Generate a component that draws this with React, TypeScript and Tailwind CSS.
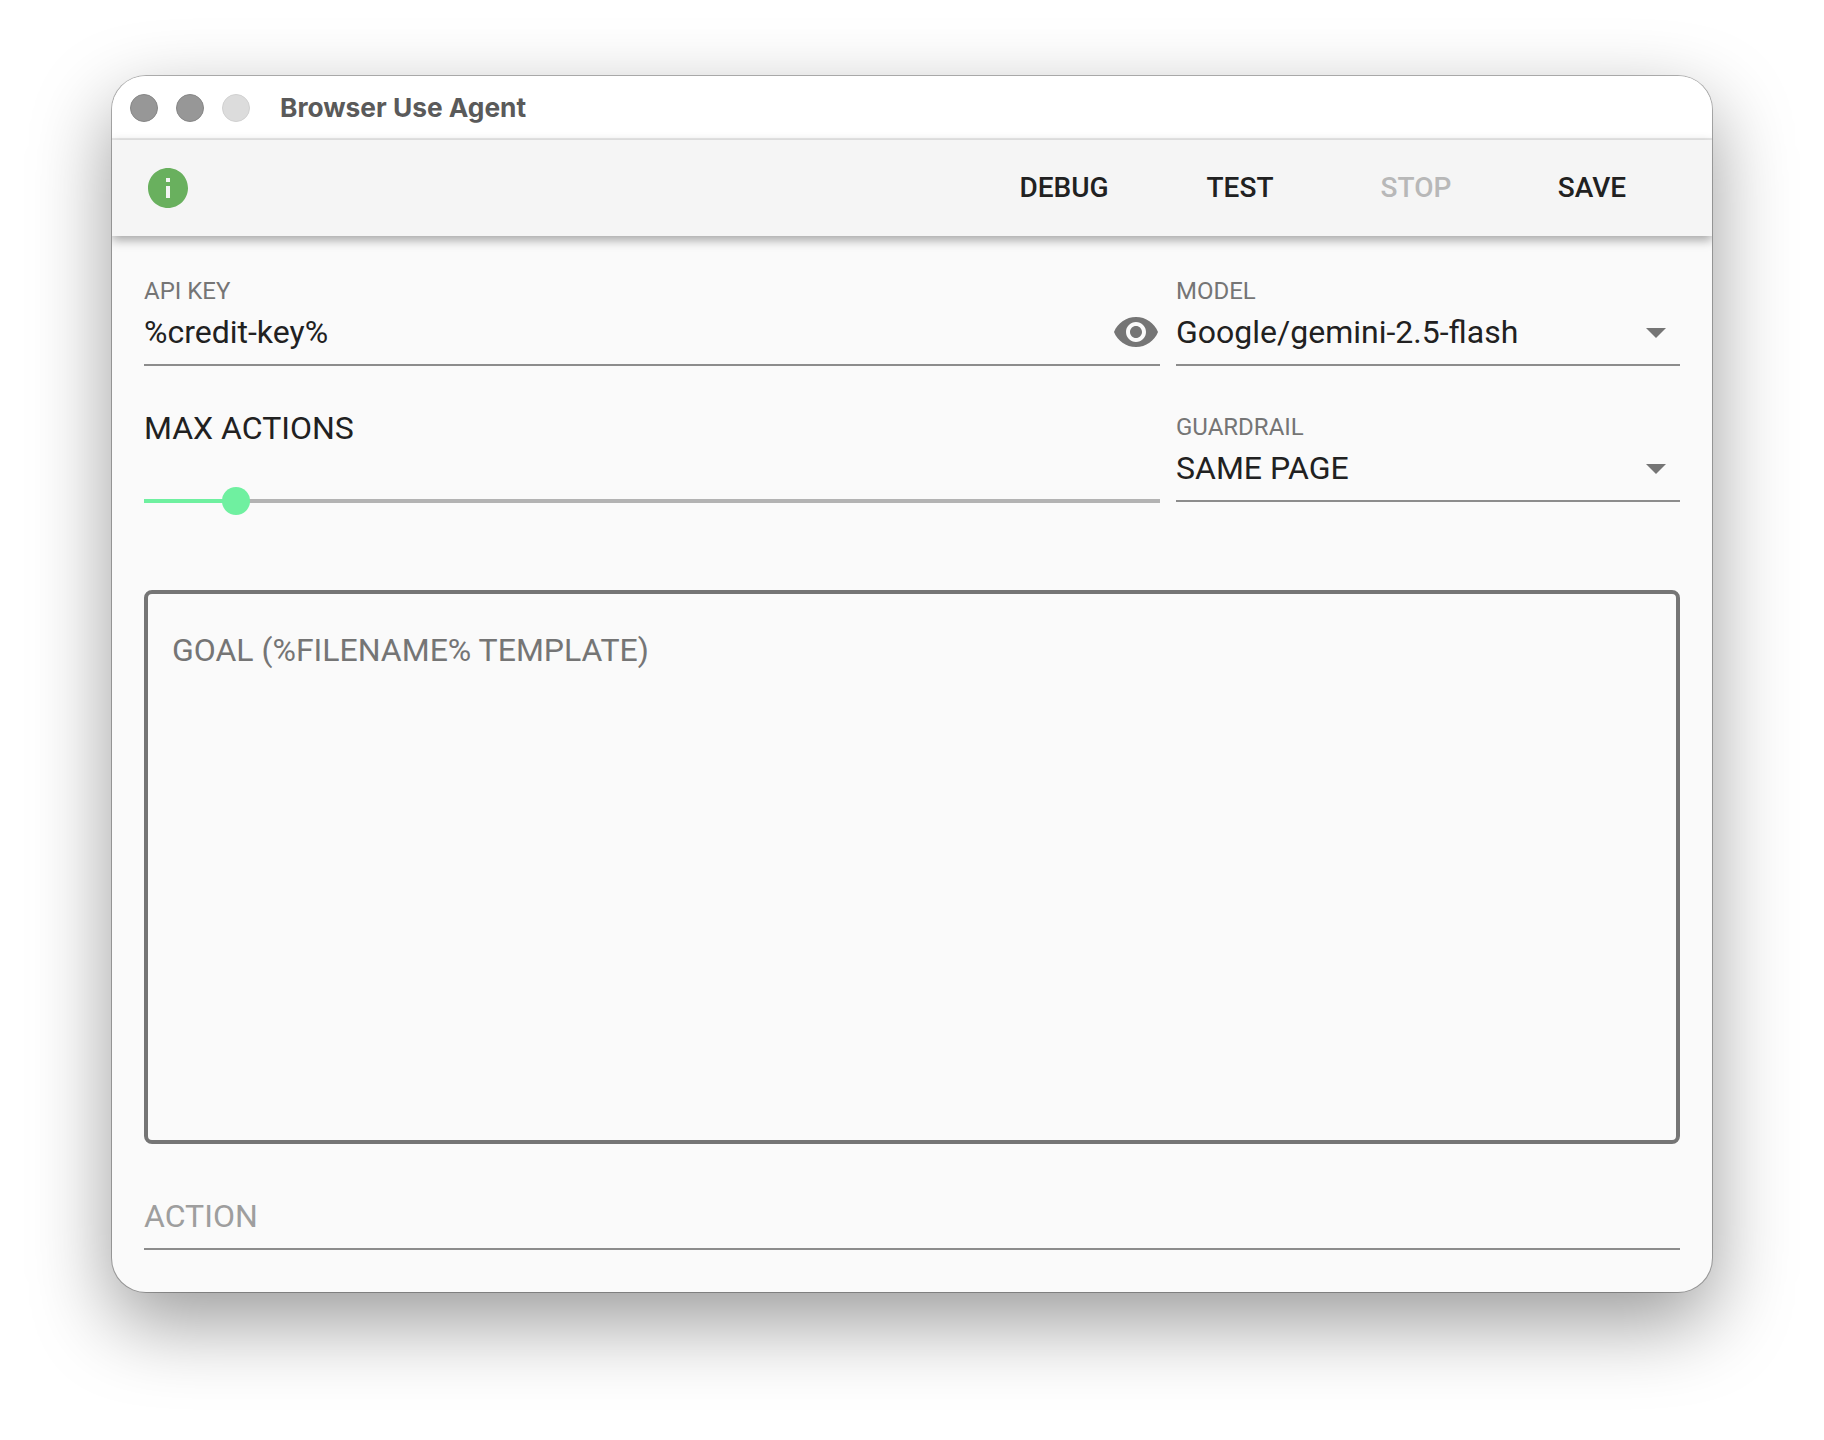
const ROBOTO = "font-['Roboto',sans-serif]";

const ArrowDrop = () => (
  <svg viewBox="0 0 24 24" className="h-12 w-12 shrink-0 fill-[#757575]">
    <path d="M7 10l5 5 5-5z" />
  </svg>
);

const Field = ({ label, value }: { label: string; value: string }) => (
  <div className="flex h-[92px] flex-col border-b-2 border-[#8c8c8c]">
    <div className="h-[34px] text-[24px] leading-[34px] text-[#757575]">{label}</div>
    <div className="flex h-12 items-center justify-between text-[32px] leading-[48px] text-[#212121]">
      <span>{value}</span>
      <ArrowDrop />
    </div>
  </div>
);

export default function App() {
  return (
    <div className="min-h-[1440px] bg-white pl-[112px] pt-[76px]">
      <div className={`flex h-[1216px] w-[1600px] flex-col overflow-hidden rounded-[34px] bg-[#fafafa] shadow-[0_0_0_1px_rgba(0,0,0,0.28),0_30px_80px_rgba(0,0,0,0.4)] ${ROBOTO}`}>
        {/* Title bar */}
        <div className="flex h-16 shrink-0 items-center border-b-2 border-[#ebebeb] bg-white pl-[18px]">
          <div className="mt-[2px] flex gap-[18px]">
            <div className="h-7 w-7 rounded-full border border-[#868686] bg-[#979797]" />
            <div className="h-7 w-7 rounded-full border border-[#868686] bg-[#979797]" />
            <div className="h-7 w-7 rounded-full border border-[#d0d0d0] bg-[#dcdcdc]" />
          </div>
          <span className="ml-[30px] mt-[2px] font-['Inter',sans-serif] text-[26.3px] font-bold text-[#5a5a5a]">
            Browser Use Agent
          </span>
        </div>

        {/* Toolbar */}
        <div className="relative z-10 flex h-24 shrink-0 items-center justify-between bg-[#f5f5f5] px-8 shadow-[0_4px_10px_rgba(0,0,0,0.35)]">
          <svg viewBox="0 0 24 24" className="h-12 w-12 fill-[#69b05e]">
            <path d="M12 2C6.48 2 2 6.48 2 12s4.48 10 10 10 10-4.48 10-10S17.52 2 12 2zm1 15h-2v-6h2v6zm0-8h-2V7h2v2z" />
          </svg>
          <div className="flex text-[28px] font-medium text-[#212121]">
            <button className="w-44">DEBUG</button>
            <button className="w-44">TEST</button>
            <button className="w-44 text-[#b8b8b8]">STOP</button>
            <button className="w-44">SAVE</button>
          </div>
        </div>

        {/* Form */}
        <div className="flex flex-1 flex-col px-8 pt-[38px]">
          <div className="grid grid-cols-[1016px_504px] gap-x-4 gap-y-11">
            <div className="flex h-[92px] flex-col border-b-2 border-[#8c8c8c]">
              <div className="h-[34px] text-[24px] leading-[34px] text-[#757575]">API KEY</div>
              <div className="flex h-12 items-center justify-between text-[32px] leading-[48px] text-[#212121]">
                <span>%credit-key%</span>
                <svg viewBox="0 0 24 24" className="h-12 w-12 shrink-0 fill-[#757575]">
                  <path d="M12 4.5C7 4.5 2.73 7.61 1 12c1.73 4.39 6 7.5 11 7.5s9.27-3.11 11-7.5c-1.73-4.39-6-7.5-11-7.5zM12 17c-2.76 0-5-2.24-5-5s2.24-5 5-5 5 2.24 5 5-2.24 5-5 5zm0-8c-1.66 0-3 1.34-3 3s1.34 3 3 3 3-1.34 3-3-1.34-3-3-3z" />
                </svg>
              </div>
            </div>
            <Field label="MODEL" value="Google/gemini-2.5-flash" />

            <div className="flex h-[92px] flex-col">
              <div className="h-[36px] shrink-0 text-[32px] leading-[36px] text-[#212121]">MAX ACTIONS</div>
              <div className="relative mt-[53px] flex h-1 shrink-0">
                <div className="w-[92px] bg-[#6ff0a0]" />
                <div className="flex-1 bg-[#b3b3b3]" />
                <div className="absolute left-[78px] top-[-12px] h-7 w-7 rounded-full bg-[#6ff0a0]" />
              </div>
            </div>
            <Field label="GUARDRAIL" value="SAME PAGE" />
          </div>

          <div className="mt-[88px] h-[554px] rounded-lg border-4 border-[#757575] px-6 pt-[34px] text-[32px] leading-[44px] text-[#757575]">
            GOAL (%FILENAME% TEMPLATE)
          </div>

          <div className="mt-[50px] h-[56px] border-b-2 border-[#8c8c8c] text-[32px] leading-[44px] text-[#9e9e9e]">
            ACTION
          </div>
        </div>
      </div>
    </div>
  );
}
